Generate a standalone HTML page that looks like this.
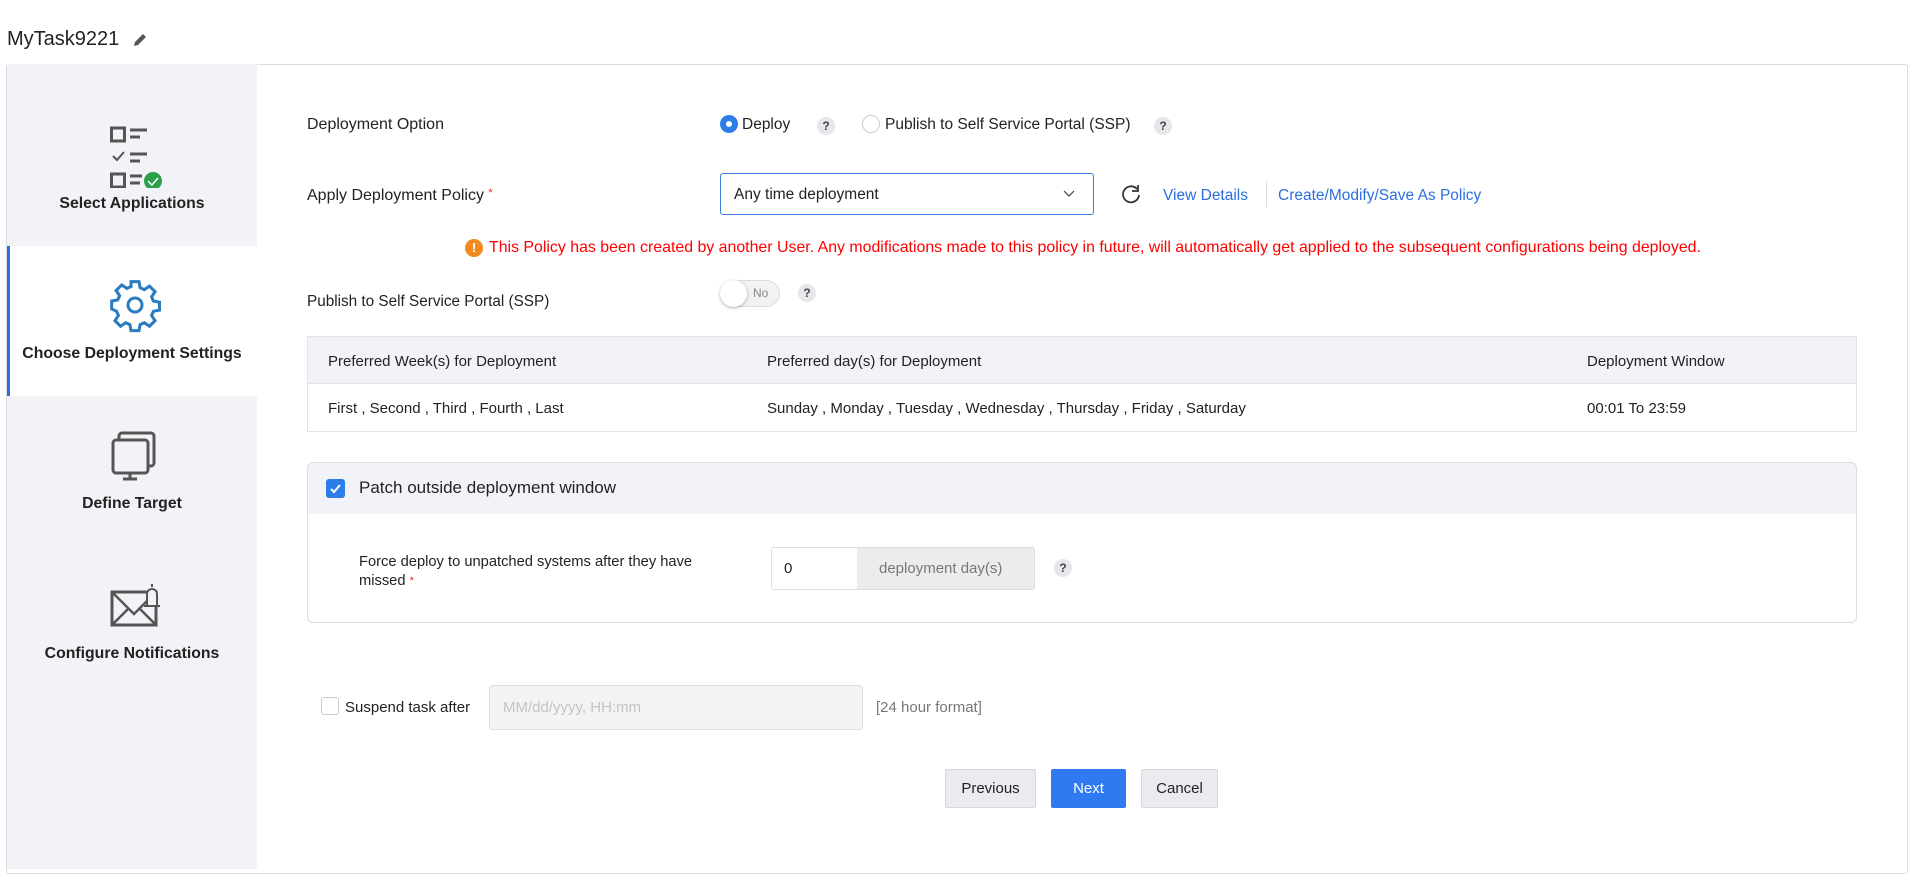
<!DOCTYPE html>
<html><head><meta charset="utf-8"><style>
*{box-sizing:border-box;margin:0;padding:0}
body{width:1920px;height:869px;overflow:hidden;background:#fff;font-family:"Liberation Sans",sans-serif;color:#222;font-size:15px;position:relative}
.a{position:absolute;white-space:nowrap}
.q{position:absolute;width:18px;height:18px;border-radius:50%;background:#e6e7eb;color:#444;font-size:12px;text-align:center;line-height:18px;font-weight:bold}
.side{position:absolute;left:7px;top:64px;width:250px;height:805px;background:#f2f3f7}
.lab{position:absolute;width:250px;text-align:center;font-weight:bold;font-size:15.8px;color:#222;left:0}
.btn{position:absolute;top:769px;height:39px;border:1px solid #d6d7db;background:#eaebee;border-radius:2px;font-size:15px;text-align:center;line-height:37px;color:#222}
</style></head><body>
<div class="a" style="left:7px;top:28px;font-size:20px;color:#222">MyTask9221</div>
<svg class="a" style="left:132px;top:32px" width="16" height="16" viewBox="0 0 16 16"><path d="M2 14l1-4 8-8 3 3-8 8z" fill="#555"/></svg>
<div class="a" style="left:6px;top:64px;width:1902px;height:810px;border:1px solid #dcdde1;border-radius:3px"></div>
<div class="side">
 <svg class="a" style="left:103px;top:62px" width="60" height="62" viewBox="0 0 60 62">
  <rect x="1.5" y="2" width="13" height="13" fill="none" stroke="#555" stroke-width="3"/>
  <path d="M20 4h17M20 11h10" stroke="#555" stroke-width="3"/>
  <path d="M3 30l4 4 7-8" fill="none" stroke="#555" stroke-width="2"/>
  <path d="M20 28h17M20 35h10" stroke="#555" stroke-width="3"/>
  <rect x="1.5" y="48" width="13" height="13" fill="none" stroke="#555" stroke-width="3"/>
  <path d="M20 50h12M20 57h10" stroke="#555" stroke-width="3"/>
  <circle cx="43" cy="55" r="9" fill="#2aa04a"/><path d="M38 55l4 4 6-7" fill="none" stroke="#fff" stroke-width="1.5"/>
 </svg>
 <div class="lab" style="top:131px">Select Applications</div>
 <div class="a" style="left:0;top:182px;width:250px;height:150px;background:#fff;border-left:3px solid #2b6fe0"></div>
 <svg class="a" style="left:100px;top:213px" width="56" height="56" viewBox="0 0 24 24"><path fill="none" stroke="#2a7bc0" stroke-width="1.3" d="M10.3 2h3.4l.5 2.6 1.8.8 2.2-1.5 2.4 2.4-1.5 2.2.8 1.8 2.6.5v3.4l-2.6.5-.8 1.8 1.5 2.2-2.4 2.4-2.2-1.5-1.8.8-.5 2.6h-3.4l-.5-2.6-1.8-.8-2.2 1.5-2.4-2.4 1.5-2.2-.8-1.8L2 13.7v-3.4l2.6-.5.8-1.8-1.5-2.2 2.4-2.4 2.2 1.5 1.8-.8z"/><circle cx="12" cy="12" r="3" fill="none" stroke="#2a7bc0" stroke-width="1.3"/></svg>
 <div class="lab" style="top:281px">Choose Deployment Settings</div>
 <svg class="a" style="left:104px;top:367px" width="46" height="50" viewBox="0 0 46 50"><rect x="8" y="2" width="35" height="33" rx="3" fill="none" stroke="#555" stroke-width="3"/><rect x="2" y="9" width="35" height="33" rx="3" fill="#f2f3f7" stroke="#555" stroke-width="3"/><path d="M19 42v5M12 48h14" stroke="#555" stroke-width="3"/></svg>
 <div class="lab" style="top:431px">Define Target</div>
 <svg class="a" style="left:103px;top:516px" width="52" height="50" viewBox="0 0 52 50"><rect x="2" y="12" width="44" height="33" fill="none" stroke="#555" stroke-width="3"/><path d="M2 12l22 22 22-22M2 45l16-16M46 45l-16-16" fill="none" stroke="#555" stroke-width="2.5"/><path d="M37 26v-12a5 5 0 0 1 10 0v12h3H34z" fill="#f2f3f7" stroke="#555" stroke-width="2"/><path d="M42 4v3" stroke="#555" stroke-width="2"/></svg>
 <div class="lab" style="top:581px">Configure Notifications</div>
</div>

<div class="a" style="left:307px;top:116px;font-size:16px">Deployment Option</div>
<div class="a" style="left:720px;top:115px;width:18px;height:18px;border-radius:50%;background:#2b7de9"><div style="position:absolute;left:6px;top:6px;width:6px;height:6px;border-radius:50%;background:#fff"></div></div>
<div class="a" style="left:742px;top:116px;font-size:15.5px">Deploy</div>
<div class="q" style="left:817px;top:117px">?</div>
<div class="a" style="left:862px;top:115px;width:18px;height:18px;border-radius:50%;border:1px solid #ccc"></div>
<div class="a" style="left:885px;top:116px;font-size:15.5px">Publish to Self Service Portal (SSP)</div>
<div class="q" style="left:1154px;top:117px">?</div>

<div class="a" style="left:307px;top:187px;font-size:16px">Apply Deployment Policy <span style="color:#e22;font-size:11px;vertical-align:top">*</span></div>
<div class="a" style="left:720px;top:173px;width:374px;height:42px;border:1px solid #3a7be0;border-radius:3px;background:#fff"><span style="position:absolute;left:13px;top:12px;font-size:15.5px">Any time deployment</span>
<svg style="position:absolute;right:18px;top:16px" width="12" height="8" viewBox="0 0 12 8"><path d="M1 1l5 5 5-5" fill="none" stroke="#444" stroke-width="1.2"/></svg></div>
<svg class="a" style="left:1120px;top:183px" width="22" height="22" viewBox="0 0 22 22"><path d="M17 6A8 8 0 1 0 19 12" fill="none" stroke="#333" stroke-width="1.8"/><path d="M18 2v6h-6" fill="none" stroke="#333" stroke-width="1.8"/></svg>
<div class="a" style="left:1163px;top:187px;color:#2b6fe0;font-size:15.5px">View Details</div>
<div class="a" style="left:1266px;top:181px;width:1px;height:26px;background:#ddd"></div>
<div class="a" style="left:1278px;top:187px;color:#2b6fe0;font-size:15.5px">Create/Modify/Save As Policy</div>

<div class="a" style="left:465px;top:239px;width:18px;height:18px;border-radius:50%;background:#f28b1d;color:#fff;font-size:13px;font-weight:bold;text-align:center;line-height:18px">!</div>
<div class="a" style="left:489px;top:239px;color:#f00;font-size:15.9px">This Policy has been created by another User. Any modifications made to this policy in future, will automatically get applied to the subsequent configurations being deployed.</div>

<div class="a" style="left:307px;top:293px;font-size:15.3px">Publish to Self Service Portal (SSP)</div>
<div class="a" style="left:720px;top:280px;width:60px;height:27px;border-radius:14px;background:#f2f2f2;border:1px solid #ddd"><div style="position:absolute;left:-1px;top:-1px;width:27px;height:27px;border-radius:50%;background:#fff;box-shadow:0 1px 3px rgba(0,0,0,.3)"></div><span style="position:absolute;left:32px;top:5px;font-size:12px;color:#888">No</span></div>
<div class="q" style="left:798px;top:284px">?</div>

<div class="a" style="left:307px;top:336px;width:1550px;height:96px;border:1px solid #e1e2e6">
 <div style="position:absolute;left:0;top:0;width:100%;height:47px;background:#f2f3f7;border-bottom:1px solid #e1e2e6"></div>
 <div class="a" style="left:20px;top:16px">Preferred Week(s) for Deployment</div>
 <div class="a" style="left:459px;top:16px">Preferred day(s) for Deployment</div>
 <div class="a" style="left:1279px;top:16px">Deployment Window</div>
 <div class="a" style="left:20px;top:63px">First , Second , Third , Fourth , Last</div>
 <div class="a" style="left:459px;top:63px">Sunday , Monday , Tuesday , Wednesday , Thursday , Friday , Saturday</div>
 <div class="a" style="left:1279px;top:63px">00:01 To 23:59</div>
</div>

<div class="a" style="left:307px;top:462px;width:1550px;height:161px;border:1px solid #dcdde1;border-radius:6px;overflow:hidden">
 <div style="position:absolute;left:0;top:0;width:100%;height:51px;background:#f2f3f7"></div>
 <div class="a" style="left:18px;top:16px;width:19px;height:19px;border-radius:3px;background:#2b7de9"><svg width="19" height="19" viewBox="0 0 19 19"><path d="M5 10l3 3 6-7" fill="none" stroke="#fff" stroke-width="2"/></svg></div>
 <div class="a" style="left:51px;top:15px;font-size:17px">Patch outside deployment window</div>
 <div class="a" style="left:51px;top:90px;font-size:14.7px;line-height:19px">Force deploy to unpatched systems after they have<br>missed <span style="color:#e22;font-size:11px;vertical-align:top">*</span></div>
 <div class="a" style="left:463px;top:84px;width:264px;height:43px;border:1px solid #dcdde1;border-radius:3px;background:#ebecee"><div style="position:absolute;left:0;top:0;width:85px;height:41px;background:#fff"></div><span style="position:absolute;left:12px;top:12px">0</span><span style="position:absolute;left:107px;top:12px;color:#777">deployment day(s)</span></div>
 <div class="q" style="left:746px;top:96px">?</div>
</div>

<div class="a" style="left:321px;top:697px;width:18px;height:18px;border:1px solid #ccc;border-radius:3px"></div>
<div class="a" style="left:345px;top:699px">Suspend task after</div>
<div class="a" style="left:489px;top:685px;width:374px;height:45px;border:1px solid #dcdde1;border-radius:3px;background:#f2f3f3"><span style="position:absolute;left:13px;top:13px;color:#c4c4c4">MM/dd/yyyy, HH:mm</span></div>
<div class="a" style="left:876px;top:699px;color:#777">[24 hour format]</div>

<div class="btn" style="left:945px;width:91px">Previous</div>
<div class="btn" style="left:1051px;width:75px;background:#2f7af0;border-color:#2f7af0;color:#fff">Next</div>
<div class="btn" style="left:1141px;width:77px">Cancel</div>
</body></html>
